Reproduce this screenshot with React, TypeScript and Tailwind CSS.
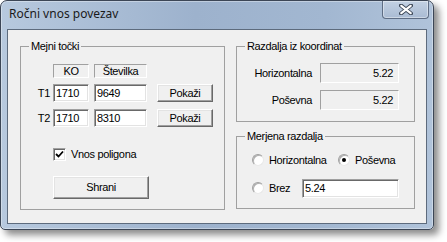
const sunken =
  'border border-t-[#a0a0a0] border-l-[#a0a0a0] border-b-white border-r-white shadow-[inset_1px_1px_0_#696969,inset_-1px_-1px_0_#e3e3e3]'
const staticEdge = 'border border-t-[#a0a0a0] border-l-[#a0a0a0] border-b-white border-r-white'
const raised =
  'border border-t-white border-l-white border-b-[#696969] border-r-[#696969] shadow-[inset_-1px_-1px_0_#a0a0a0,inset_1px_1px_0_#e3e3e3] bg-[#f0f0f0]'

const TextBox = ({ value, className }: { value: string; className: string }) => (
  <div className={`${sunken} ${className} bg-white flex items-center pl-[2px]`}>{value}</div>
)

const Button = ({ label, className }: { label: string; className: string }) => (
  <div className={`${raised} ${className} flex items-center justify-center`}>{label}</div>
)

const Radio = ({ checked }: { checked?: boolean }) => (
  <div className="w-[12px] h-[12px] rounded-full bg-white border border-t-[#a0a0a0] border-l-[#a0a0a0] border-b-[#e8e8e8] border-r-[#e8e8e8] shadow-[inset_1px_1px_0_#b0b0b0] flex items-center justify-center shrink-0">
    {checked && <div className="w-[4px] h-[4px] rounded-full bg-black" />}
  </div>
)

const Row = ({ label, value }: { label: string; value: string }) => (
  <div className="flex items-center">
    <span className="w-[75px] text-right">{label}</span>
    <div className={`${staticEdge} ml-[8px] w-[79px] h-[20px] flex items-center justify-end pr-[5px]`}>{value}</div>
  </div>
)

export default function App() {
  return (
    <div className="w-[447px] h-[242px] bg-white">
      {/* Window */}
      <div className="w-[434px] h-[230px] rounded-t-[7px] rounded-b-[5px] border border-[#3c4656] bg-[linear-gradient(90deg,#b7c9de_0%,#9db2cd_45%,#a2b7d1_75%,#b0c3da_100%)] shadow-[5px_5px_7px_rgba(0,0,0,0.45),inset_0_0_0_1px_rgba(255,255,255,0.35)] flex flex-col pl-[6px] pr-[6px] pb-[5px]">
        {/* Title bar */}
        <div className="h-[28px] flex items-start shrink-0">
          <span className="mt-[5px] ml-[2px] text-[12px] leading-[16px] text-[#1a1a1a] font-['Noto_Sans',sans-serif]">
            Ročni vnos povezav
          </span>
          <div className="ml-auto mr-[-2px] w-[47px] h-[18px] rounded-b-[4px] border border-t-0 border-[#5e6d84] bg-[linear-gradient(180deg,#c3d1e3,#a9bbd3)] shadow-[inset_0_0_0_1px_rgba(255,255,255,0.4)] flex items-center justify-center">
            <svg width="14" height="11" viewBox="0 0 14 11">
              <path d="M2 1.5 L12 9.5 M12 1.5 L2 9.5" stroke="#3b4656" strokeWidth="4" strokeLinecap="round" />
              <path d="M2.3 1.8 L11.7 9.2 M11.7 1.8 L2.3 9.2" stroke="#ffffff" strokeWidth="2.2" strokeLinecap="round" />
            </svg>
          </div>
        </div>

        {/* Client area */}
        <div className="flex-1 border border-[#5d6b7d] bg-[#f0f0f0] pl-[12px] pt-[10px] flex text-[11px] leading-[13px] tracking-[-0.35px] text-black font-['Liberation_Sans',Arial,sans-serif]">
          {/* Mejni točki */}
          <fieldset className="w-[205px] h-[170px] border border-[#a0a0a0]">
            <legend className="ml-[8px] px-[2px]">Mejni točki</legend>
            <div className="pl-[32px] mt-[11px] flex">
              <div className={`${staticEdge} w-[36px] h-[14px] flex items-center justify-center`}>KO</div>
              <div className={`${staticEdge} ml-[5px] w-[53px] h-[14px] flex items-center justify-center`}>Številka</div>
            </div>
            <div className="mt-[6px] flex items-center">
              <span className="w-[32px] text-right pr-[3px]">T1</span>
              <TextBox value="1710" className="w-[36px] h-[18px]" />
              <TextBox value="9649" className="ml-[5px] w-[53px] h-[18px]" />
              <Button label="Pokaži" className="ml-[10px] w-[56px] h-[18px]" />
            </div>
            <div className="mt-[7px] flex items-center">
              <span className="w-[32px] text-right pr-[3px]">T2</span>
              <TextBox value="1710" className="w-[36px] h-[18px]" />
              <TextBox value="8310" className="ml-[5px] w-[53px] h-[18px]" />
              <Button label="Pokaži" className="ml-[10px] w-[56px] h-[18px]" />
            </div>
            <div className="mt-[21px] pl-[32px] flex items-center">
              <div className={`${sunken} w-[13px] h-[13px] bg-white flex items-center justify-center`}>
                <svg width="9" height="9" viewBox="0 0 9 9">
                  <path d="M1 4 L3.5 6.5 L8 1.5" stroke="#000" strokeWidth="1.8" fill="none" />
                </svg>
              </div>
              <span className="ml-[5px]">Vnos poligona</span>
            </div>
            <Button label="Shrani" className="mt-[15px] ml-[32px] w-[96px] h-[23px]" />
          </fieldset>

          {/* Right column */}
          <div className="ml-[11px] flex flex-col">
            <fieldset className="w-[179px] h-[82px] border border-[#a0a0a0]">
              <legend className="ml-[8px] px-[2px]">Razdalja iz koordinat</legend>
              <div className="mt-[10px] flex flex-col gap-[7px]">
                <Row label="Horizontalna" value="5.22" />
                <Row label="Poševna" value="5.22" />
              </div>
            </fieldset>

            <fieldset className="mt-[8px] w-[179px] h-[79px] border border-[#a0a0a0]">
              <legend className="ml-[8px] px-[2px]">Merjena razdalja</legend>
              <div className="mt-[9px] pl-[15px] flex items-center h-[16px]">
                <div className="w-[86px] flex items-center">
                  <Radio />
                  <span className="ml-[5px]">Horizontalna</span>
                </div>
                <Radio checked />
                <span className="ml-[5px]">Poševna</span>
              </div>
              <div className="mt-[10px] pl-[15px] flex items-center h-[20px]">
                <div className="w-[50px] flex items-center">
                  <Radio />
                  <span className="ml-[5px]">Brez</span>
                </div>
                <TextBox value="5.24" className="w-[97px] h-[19px]" />
              </div>
            </fieldset>
          </div>
        </div>
      </div>
    </div>
  )
}
